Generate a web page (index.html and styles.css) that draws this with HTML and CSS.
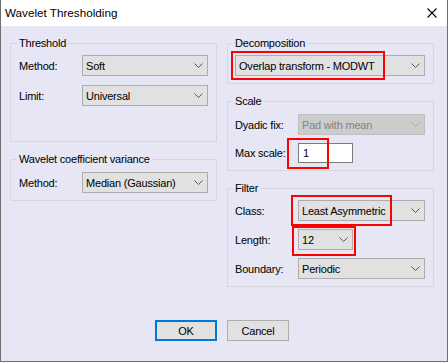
FILE: index.html
```html
<!DOCTYPE html>
<html lang="en">
<head>
    <meta charset="UTF-8">
    <title>Wavelet Thresholding</title>
    <link rel="stylesheet" href="styles.css">
</head>
<body>

<div class="window">
    <div class="titlebar">
        <span class="title">Wavelet Thresholding</span>
        <svg class="close" width="10" height="10" viewBox="0 0 10 10">
            <path d="M0.5 0.5 L9.5 9.5 M9.5 0.5 L0.5 9.5" stroke="#000" stroke-width="1.1" fill="none"/>
        </svg>
    </div>

    <div class="content">
        <div class="columns">
            <div class="column">
                <fieldset class="group threshold">
                    <legend>Threshold</legend>
                    <div class="row gap9">
                        <span class="label">Method:</span>
                        <div class="combo"><span>Soft</span><svg class="chev" width="9" height="5" viewBox="0 0 9 5"><path d="M0.5 0.5 L4.5 4.5 L8.5 0.5" stroke="#555" fill="none"/></svg></div>
                    </div>
                    <div class="row">
                        <span class="label">Limit:</span>
                        <div class="combo"><span>Universal</span><svg class="chev" width="9" height="5" viewBox="0 0 9 5"><path d="M0.5 0.5 L4.5 4.5 L8.5 0.5" stroke="#555" fill="none"/></svg></div>
                    </div>
                </fieldset>

                <fieldset class="group variance">
                    <legend>Wavelet coefficient variance</legend>
                    <div class="row">
                        <span class="label">Method:</span>
                        <div class="combo"><span>Median (Gaussian)</span><svg class="chev" width="9" height="5" viewBox="0 0 9 5"><path d="M0.5 0.5 L4.5 4.5 L8.5 0.5" stroke="#555" fill="none"/></svg></div>
                    </div>
                </fieldset>
            </div>

            <div class="column right">
                <fieldset class="group decomposition">
                    <legend>Decomposition</legend>
                    <div class="combo"><span>Overlap transform - MODWT</span><svg class="chev" width="9" height="5" viewBox="0 0 9 5"><path d="M0.5 0.5 L4.5 4.5 L8.5 0.5" stroke="#555" fill="none"/></svg></div>
                </fieldset>

                <fieldset class="group scale">
                    <legend>Scale</legend>
                    <div class="row gap8">
                        <span class="label">Dyadic fix:</span>
                        <div class="combo disabled"><span>Pad with mean</span><svg class="chev" width="9" height="5" viewBox="0 0 9 5"><path d="M0.5 0.5 L4.5 4.5 L8.5 0.5" stroke="#a8a8a8" fill="none"/></svg></div>
                    </div>
                    <div class="row">
                        <span class="label">Max scale:</span>
                        <div class="textbox">1</div>
                    </div>
                </fieldset>

                <fieldset class="group filter">
                    <legend>Filter</legend>
                    <div class="row gap8">
                        <span class="label">Class:</span>
                        <div class="combo"><span>Least Asymmetric</span><svg class="chev" width="9" height="5" viewBox="0 0 9 5"><path d="M0.5 0.5 L4.5 4.5 L8.5 0.5" stroke="#555" fill="none"/></svg></div>
                    </div>
                    <div class="row gap8">
                        <span class="label">Length:</span>
                        <div class="combo short"><span>12</span><svg class="chev" width="9" height="5" viewBox="0 0 9 5"><path d="M0.5 0.5 L4.5 4.5 L8.5 0.5" stroke="#555" fill="none"/></svg></div>
                    </div>
                    <div class="row">
                        <span class="label">Boundary:</span>
                        <div class="combo"><span>Periodic</span><svg class="chev" width="9" height="5" viewBox="0 0 9 5"><path d="M0.5 0.5 L4.5 4.5 L8.5 0.5" stroke="#555" fill="none"/></svg></div>
                    </div>
                </fieldset>
            </div>
        </div>

        <div class="buttons">
            <button class="btn default">OK</button>
            <button class="btn">Cancel</button>
        </div>
    </div>

    <!-- highlight marks drawn over the dialog -->
    <div class="mark mark-decomp"></div>
    <div class="mark mark-scale"></div>
    <div class="mark mark-class"></div>
    <div class="mark mark-length"></div>
</div>

</body>
</html>
```

FILE: styles.css
```css
body {
    margin: 0;
    font-family: "Liberation Sans", Arial, sans-serif;
    font-size: 11px;
    letter-spacing: -0.2px;
    color: #000;
}
.window {
    position: relative;
    width: 448px;
    height: 362px;
    box-sizing: border-box;
    background-color: #e6e6f4;
    border: 1px solid #6f6f6f;
    border-top: none;
    overflow: hidden;
}
.titlebar {
    display: flex;
    align-items: center;
    justify-content: space-between;
    height: 26px;
    background-color: #fff;
    padding: 0 10px 0 4px;
}
.title {
    font-size: 11.7px;
    line-height: 16px;
    letter-spacing: 0;
}
.group {
    margin: 0;
    min-width: 0;
    border: 1px solid #d6d6de;
    padding: 4px 8px 7px 8px;
}
.group legend {
    padding: 0 2px;
    margin-left: -2px;
    line-height: 16px;
}
.content {
    padding: 9px 0 0 9px;
}
.columns {
    display: flex;
    gap: 10px;
}
.column {
    width: 207px;
    display: flex;
    flex-direction: column;
    gap: 9px;
}
.right .group {
    padding-left: 7px;
}
.threshold {
    padding-bottom: 35px;
}
.variance {
    padding-top: 5px;
}
.scale {
    padding-top: 5px;
}
.row {
    display: flex;
    align-items: center;
}
.row.gap9 {
    margin-bottom: 9px;
}
.row.gap8 {
    margin-bottom: 8px;
}
.label {
    width: 63px;
    flex-shrink: 0;
}
.combo {
    flex: 1;
    height: 21px;
    box-sizing: border-box;
    display: flex;
    align-items: center;
    justify-content: space-between;
    background-color: #e1e1e1;
    border: 1px solid #adadad;
    padding: 0 4px 0 3px;
}
.combo.short {
    flex: none;
    width: 55px;
}
.combo.disabled {
    background-color: #cccccc;
    border-color: #bfbfbf;
    color: #838383;
}
.textbox {
    width: 55px;
    height: 20px;
    box-sizing: border-box;
    background-color: #fff;
    border: 1px solid #7a7a7a;
    padding: 0 4px;
    line-height: 18px;
}
.buttons {
    display: flex;
    justify-content: center;
    gap: 10px;
    margin-top: 33px;
    padding-right: 13px;
}
.btn {
    width: 62px;
    height: 21px;
    box-sizing: border-box;
    font-family: inherit;
    font-size: 11px;
    letter-spacing: -0.2px;
    background-color: #e1e1e1;
    border: 1px solid #adadad;
    padding: 0;
}
.btn.default {
    border: 2px solid #0078d7;
}
.mark {
    position: absolute;
    border: 2px solid #ff0000;
    box-sizing: border-box;
}
.mark-decomp {
    left: 230px;
    top: 51px;
    width: 154px;
    height: 29px;
}
.mark-scale {
    left: 286px;
    top: 138px;
    width: 42px;
    height: 31px;
}
.mark-class {
    left: 290px;
    top: 195px;
    width: 101px;
    height: 31px;
}
.mark-length {
    left: 291px;
    top: 226px;
    width: 64px;
    height: 30px;
}
```
